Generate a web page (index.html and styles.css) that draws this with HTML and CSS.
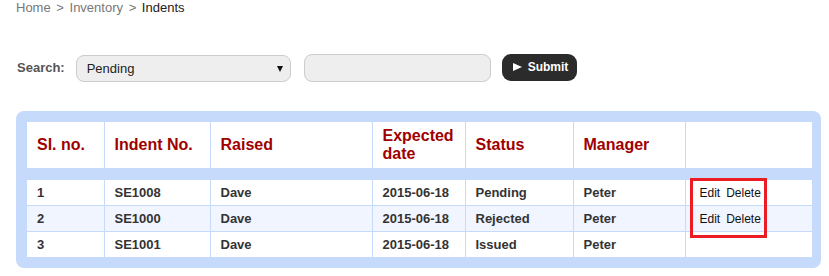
FILE: index.html
```html
<!DOCTYPE html>
<html lang="en">
<head>
  <meta charset="UTF-8" />
  <title>Indents</title>
  <link rel="stylesheet" href="styles.css">
</head>
<body>
  <div class="page">
    <div class="crumbs">
      <a href="#">Home</a> <span class="sep">&gt;</span>
      <a href="#">Inventory</a> <span class="sep">&gt;</span>
      <span class="current">Indents</span>
    </div>

    <form class="search" onsubmit="return false;">
      <label for="statusSel">Search:</label>
      <div class="select-wrap">
        <select id="statusSel">
          <option>Pending</option>
          <option>Rejected</option>
          <option>Issued</option>
        </select>
        <span class="arrow"></span>
      </div>
      <input type="text" class="query" />
      <button type="submit" class="submit"><span class="play"></span>Submit</button>
    </form>

    <div class="table-box">
      <table class="indents">
        <colgroup>
          <col class="c1"><col class="c2"><col class="c3"><col class="c4">
          <col class="c5"><col class="c6"><col class="c7">
        </colgroup>
        <thead>
          <tr>
            <th>Sl. no.</th>
            <th>Indent No.</th>
            <th>Raised</th>
            <th>Expected date</th>
            <th>Status</th>
            <th>Manager</th>
            <th></th>
          </tr>
        </thead>
        <tbody>
          <tr>
            <td>1</td><td>SE1008</td><td>Dave</td><td>2015-06-18</td><td>Pending</td><td>Peter</td>
            <td class="actions"><a href="#">Edit</a><a href="#">Delete</a></td>
          </tr>
          <tr class="alt">
            <td>2</td><td>SE1000</td><td>Dave</td><td>2015-06-18</td><td>Rejected</td><td>Peter</td>
            <td class="actions"><a href="#">Edit</a><a href="#">Delete</a></td>
          </tr>
          <tr>
            <td>3</td><td>SE1001</td><td>Dave</td><td>2015-06-18</td><td>Issued</td><td>Peter</td>
            <td class="actions"></td>
          </tr>
        </tbody>
      </table>
      <div class="highlight"></div>
    </div>
  </div>
</body>
</html>
```

FILE: styles.css
```css
body {
  margin: 0;
  font-family: "Liberation Sans", Arial, sans-serif;
  color: #333;
  background: #fff;
}
.page {
  padding: 0 8px 0 16px;
}
.crumbs {
  font-size: 13px;
  line-height: 16px;
  color: #777;
}
.crumbs a {
  color: #777;
  text-decoration: none;
}
.crumbs .sep {
  margin: 0 2px;
}
.crumbs .current {
  color: #222;
}

.search {
  display: flex;
  align-items: center;
  margin: 37px 0 0 1px;
  height: 29px;
}
.search label {
  font-size: 13px;
  font-weight: bold;
  color: #555;
  margin-right: 11px;
}
.select-wrap {
  position: relative;
  width: 215px;
  height: 27px;
  margin-top: 2px;
}
.select-wrap select {
  appearance: none;
  -webkit-appearance: none;
  width: 100%;
  height: 100%;
  border: 1px solid #ccc;
  border-radius: 8px;
  background: #eee;
  font-family: inherit;
  font-size: 13px;
  color: #222;
  padding: 0 10px;
  outline: none;
}
.select-wrap .arrow {
  position: absolute;
  right: 8px;
  top: 11px;
  width: 0;
  height: 0;
  border-left: 3px solid transparent;
  border-right: 3px solid transparent;
  border-top: 6px solid #111;
  pointer-events: none;
}
.query {
  width: 187px;
  height: 28px;
  box-sizing: border-box;
  margin-left: 13px;
  border: 1px solid #ccc;
  border-radius: 8px;
  background: #eee;
  font-family: inherit;
  font-size: 13px;
  padding: 0 10px;
  outline: none;
}
.submit {
  display: flex;
  align-items: center;
  width: 75px;
  height: 27px;
  margin-left: 11px;
  margin-top: -1px;
  border: none;
  border-radius: 9px;
  background: #2b2b2b;
  color: #fff;
  font-family: inherit;
  font-size: 12px;
  font-weight: bold;
  padding: 0 0 0 11px;
  cursor: pointer;
}
.submit .play {
  width: 0;
  height: 0;
  border-top: 4px solid transparent;
  border-bottom: 4px solid transparent;
  border-left: 9px solid #fff;
  margin-right: 6px;
}

.table-box {
  position: relative;
  margin-top: 29px;
  width: 783px;
  padding: 11px;
  background: #c6dafc;
  border-radius: 8px;
}
.indents {
  width: 785px;
  border-collapse: collapse;
  table-layout: fixed;
  background: #fff;
}
.indents .c1 { width: 77px; }
.indents .c2 { width: 106px; }
.indents .c3 { width: 162px; }
.indents .c4 { width: 93px; }
.indents .c5 { width: 108px; }
.indents .c6 { width: 112px; }
.indents th,
.indents td {
  border: 1px solid #c6dafc;
  text-align: left;
  padding: 0 10px;
}
.indents tr:first-child th,
.indents tr:first-child td {
  border-top: none;
}
.indents th:first-child,
.indents td:first-child {
  border-left: none;
}
.indents th:last-child,
.indents td:last-child {
  border-right: none;
}
.indents tbody tr:last-child td {
  border-bottom: none;
}
.indents th {
  height: 46px;
  font-size: 16px;
  line-height: 18px;
  font-weight: bold;
  color: #a00000;
  border-bottom: 12px solid #c6dafc;
}
.indents td {
  height: 25px;
  font-size: 13px;
  font-weight: bold;
  color: #333;
}
.indents tr.alt td {
  background: #f0f5ff;
}
.indents td.actions {
  padding-left: 14px;
  font-size: 12px;
  font-weight: normal;
}
.indents td.actions a {
  color: #111;
  text-decoration: none;
  margin-right: 6px;
}

.highlight {
  position: absolute;
  left: 674px;
  top: 67px;
  width: 71px;
  height: 54px;
  border: 3px solid #ec1c24;
}
```
